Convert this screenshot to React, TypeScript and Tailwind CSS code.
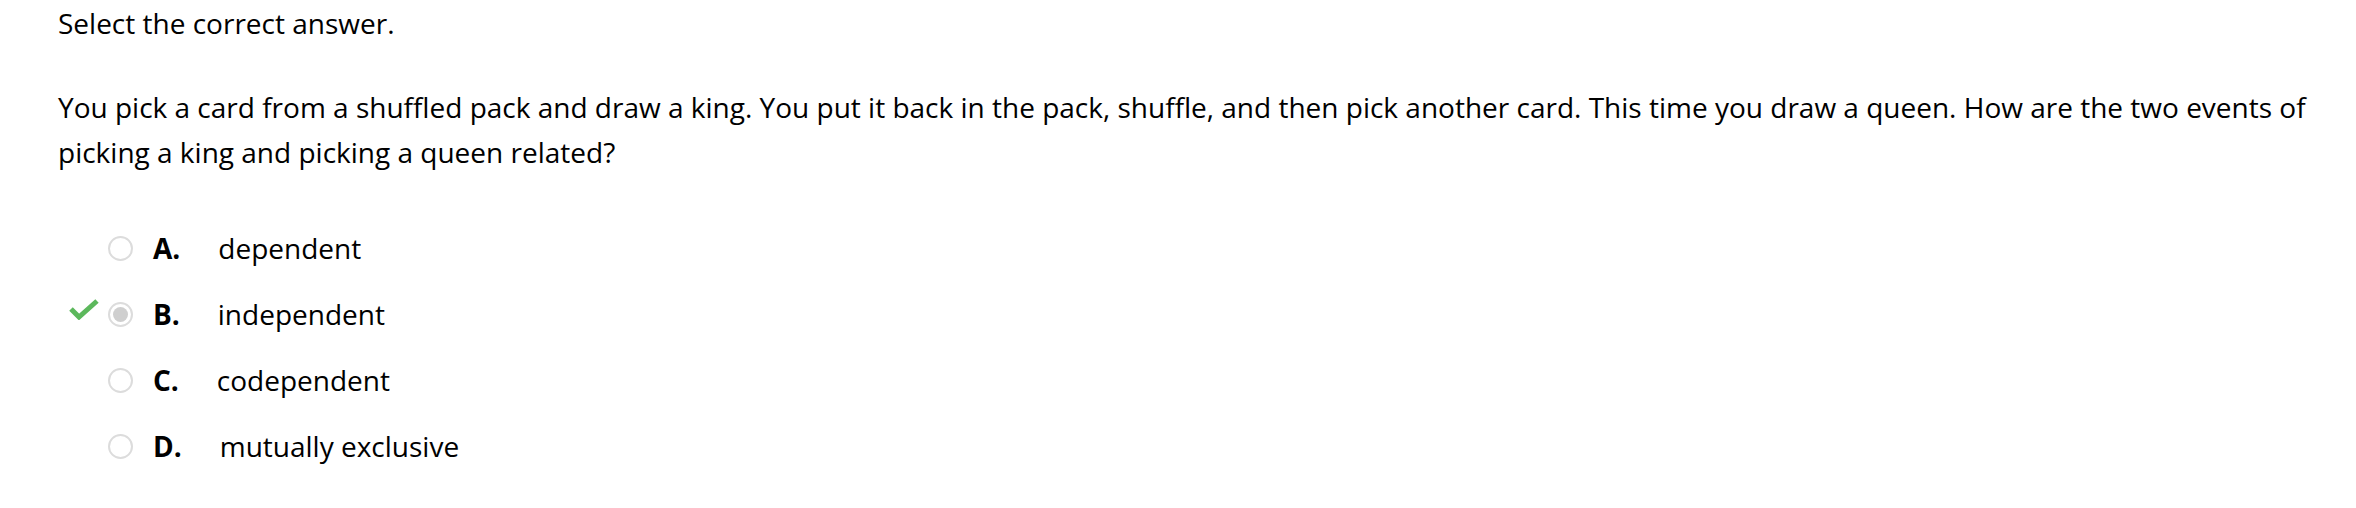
import React from "react";

const options = [
  { letter: "A.", text: "dependent", selected: false, correct: false },
  { letter: "B.", text: "independent", selected: true, correct: true },
  { letter: "C.", text: "codependent", selected: false, correct: false },
  { letter: "D.", text: "mutually exclusive", selected: false, correct: false },
];

function Radio({ selected }: { selected: boolean }) {
  return (
    <span className="w-[25px] h-[25px] rounded-full border-[2px] border-[#dcdcdc] bg-white flex items-center justify-center">
      {selected && <span className="w-[15px] h-[15px] rounded-full bg-[#cfcfcf]" />}
    </span>
  );
}

export default function App() {
  return (
    <div className="w-[2356px] h-[508px] bg-white text-black font-['Open_Sans',sans-serif] text-[28px] leading-[45px] pl-[58px] pr-[40px] pt-[1px]">
      <p>Select the correct answer.</p>
      <p className="mt-[39px]">
        You pick a card from a shuffled pack and draw a king. You put it back in the pack, shuffle, and then pick another card. This time you draw a queen. How are the two events of picking a king and picking a queen related?
      </p>
      <div className="mt-[40px] flex flex-col">
        {options.map((o) => (
          <div key={o.letter} className="h-[66px] flex items-center">
            <span className="w-[50px] flex justify-start">
              {o.correct && (
                <svg width="30" height="22" viewBox="0 0 30 22" className="ml-[11px] -mt-[10px]">
                  <path d="M2 11 L10 19 L28 3" fill="none" stroke="#5cb85c" strokeWidth="5" />
                </svg>
              )}
            </span>
            <Radio selected={o.selected} />
            <span className="ml-[20px] font-bold">{o.letter}</span>
            <span className="ml-[38px]">{o.text}</span>
          </div>
        ))}
      </div>
    </div>
  );
}
